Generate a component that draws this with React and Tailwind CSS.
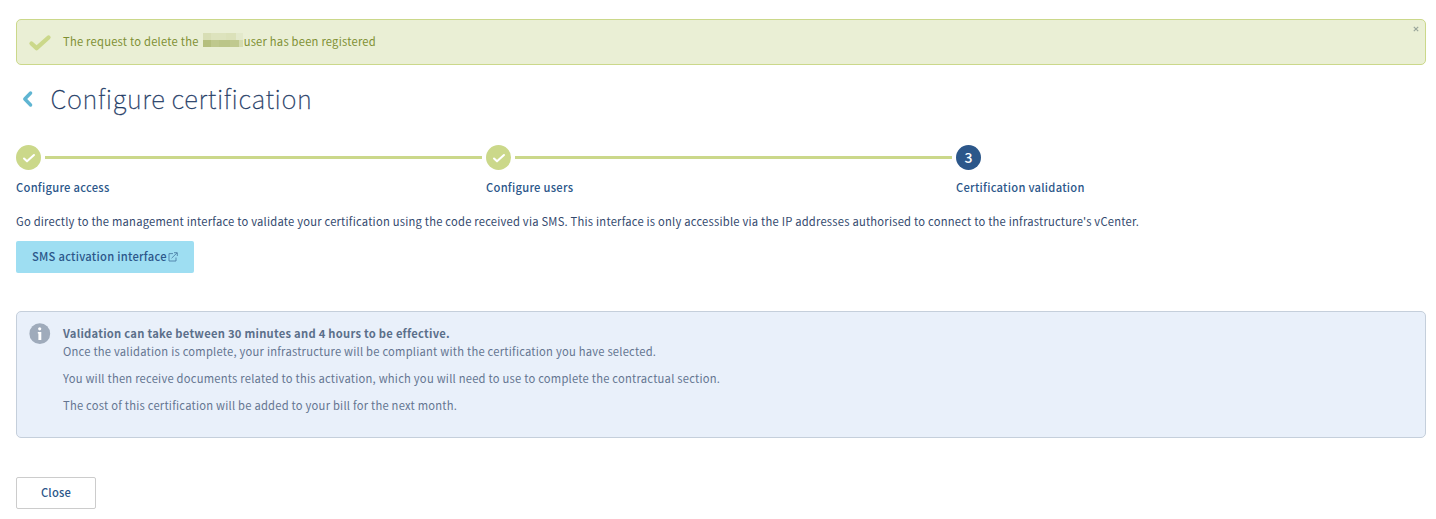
import React from "react";

function CheckMark({ className }) {
  return (
    <svg viewBox="0 0 24 18" className={className} fill="none" stroke="currentColor" strokeLinecap="round" strokeLinejoin="round">
      <path d="M3.5 9.5 L8.6 14.2 L20.5 3.5" />
    </svg>
  );
}

function SuccessAlert() {
  return (
    <div className="flex h-[46px] rounded-[5px] border border-[#cbd88a] bg-[#eaefd5] pl-[11px] text-[#7f9033]">
      <CheckMark className="mt-[13.5px] h-[18px] w-[24px] shrink-0 stroke-[4.3] text-[#cbd88a]" />
      <p className="ml-[11px] flex h-[18px] mt-[12px] items-center whitespace-pre leading-[18px]">
        <span>The request to delete the</span>
        <span className="-mt-[3px] ml-[4px] mr-[1px] flex h-[14px] w-[40px] flex-col overflow-hidden">
          <span className="flex h-[7px]">
            <span className="w-[8px] bg-[#d8deb5]" />
            <span className="w-[15px] bg-[#dde3bd]" />
            <span className="w-[10px] bg-[#dbe1b9]" />
            <span className="w-[7px] bg-[#e3e9cb]" />
          </span>
          <span className="flex h-[7px]">
            <span className="w-[8px] bg-[#b5bf7e]" />
            <span className="w-[8px] bg-[#bfc88d]" />
            <span className="w-[11px] bg-[#bbc588]" />
            <span className="w-[9px] bg-[#c0c98f]" />
            <span className="w-[4px] bg-[#d5dcb1]" />
          </span>
        </span>
        <span>user has been registered</span>
      </p>
      <button className="ml-auto mr-[6px] mt-[6px] h-[6px] w-[6px]" aria-label="Dismiss">
        <svg viewBox="0 0 6 6" className="block h-[6px] w-[6px] stroke-[#9aa69b] stroke-[1.2]">
          <path d="M0.8 0.8 L5.2 5.2 M5.2 0.8 L0.8 5.2" />
        </svg>
      </button>
    </div>
  );
}

function Step({ label, number, done }) {
  return (
    <li className="w-[470px]">
      <div className="flex h-[25px] items-center">
        <span className={done ? "flex size-[25px] items-center justify-center rounded-full bg-[#cbd88a] text-white" : "flex size-[25px] items-center justify-center rounded-full bg-[#2c578a] text-[14px] font-medium leading-[25px] tracking-normal text-white"}>
          {done ? <CheckMark className="mt-[1px] h-[10.5px] w-[14px] stroke-[3.6]" /> : number}
        </span>
        {done && <span className="ml-[4px] mr-[4px] h-[3px] flex-1 bg-[#cbd88a]" />}
      </div>
      <div className="mt-[8px] font-medium leading-[18px] tracking-[0.26px] text-[#2c578a]">{label}</div>
    </li>
  );
}

export default function App() {
  return (
    <main className="flex h-[519px] flex-col bg-white pl-4 pr-[10px] pt-[19px] font-['Noto_Sans_CJK_SC','Noto_Sans',sans-serif] text-[11.2px] tracking-[0.228px] text-[#33496e]">
      <SuccessAlert />
      <header className="mt-[14px] flex h-[38px] items-center">
        <svg viewBox="0 0 12 18" className="ml-[6px] mt-[2px] h-[18px] w-[12px] fill-none stroke-[#5fb5d2] stroke-[3.4]" strokeLinecap="round" strokeLinejoin="round">
          <path d="M8.6 3 L2.8 9 L8.6 15" />
        </svg>
        <h1 className="ml-[16.6px] text-[25.5px] font-thin leading-[38px] tracking-[0.65px] text-[#1f3c66] [-webkit-text-stroke:0.3px_#1f3c66]">Configure certification</h1>
      </header>
      <ol className="mt-[28px] flex">
        <Step label="Configure access" done />
        <Step label="Configure users" done />
        <Step label="Certification validation" number="3" />
      </ol>
      <p className="mt-[16px] whitespace-nowrap leading-[18px] tracking-[0.222px]">
        Go directly to the management interface to validate your certification using the code received via SMS. This interface is only accessible via the IP addresses authorised to connect to the infrastructure's vCenter.
      </p>
      <button className="mt-[11px] flex h-[32px] w-[178px] items-center rounded-[2px] bg-[#9edef2] pl-4 font-medium text-[#2c578a]">
        <span className="-mt-[2px] leading-[18px] tracking-[0.26px]">SMS activation interface</span>
        <svg viewBox="0 0 10 10" className="ml-[1.5px] h-[10px] w-[10px] fill-none stroke-[#4d80a8] stroke-[0.9]">
          <path d="M5 1.6 H1 V9 H8 V5.5 M3.6 6.2 L9 0.9 M6 0.7 H9.3 V4" />
        </svg>
      </button>
      <section className="mt-[38px] flex h-[127px] rounded-[5px] border border-[#c5cfdb] bg-[#e9f0fa] pl-[12px] pt-[12px] text-[#647591]">
        <svg viewBox="0 0 22 22" className="-mt-[1px] h-[22px] w-[22px] shrink-0">
          <circle cx="10.8" cy="10.7" r="10.4" fill="#9fabbb" />
          <circle cx="10.7" cy="5.8" r="1.6" fill="#fff" />
          <path d="M8.8 9 H12.3 V17 H9.4 V10.4 H8.8 Z" fill="#fff" />
        </svg>
        <div className="ml-[12px] leading-[18px]">
          <p><b className="font-bold tracking-[0.26px] text-[#5b6f8a]">Validation can take between 30 minutes and 4 hours to be effective.</b><br />Once the validation is complete, your infrastructure will be compliant with the certification you have selected.</p>
          <p className="mt-[9px]">You will then receive documents related to this activation, which you will need to use to complete the contractual section.</p>
          <p className="mt-[9px]">The cost of this certification will be added to your bill for the next month.</p>
        </div>
      </section>
      <button className="mt-[39px] flex h-[32px] w-[80px] items-center justify-center rounded-[2px] border border-[#cccccc] pb-[2px] font-medium text-[#2c578a]">Close</button>
    </main>
  );
}
